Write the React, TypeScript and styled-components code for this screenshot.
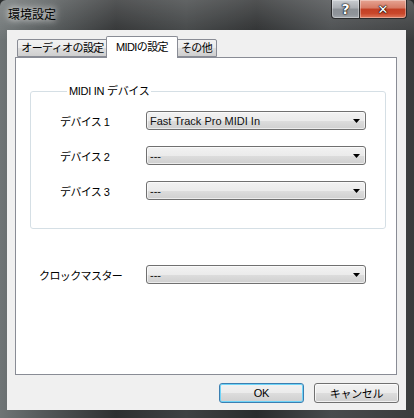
import React from 'react';
import styled, { createGlobalStyle } from 'styled-components';

const GlobalStyle = createGlobalStyle`
  html, body {
    margin: 0;
    padding: 0;
    background: #2b2d2e;
  }
  body {
    font-family: "Liberation Sans", "Noto Sans CJK JP", sans-serif;
    font-size: 11px;
    color: #000;
  }
`;

const Window = styled.div`
  width: 414px;
  height: 418px;
  box-sizing: border-box;
  display: flex;
  flex-direction: column;
  border-radius: 6px 6px 0 0;
  background:
    linear-gradient(180deg, rgba(255, 255, 255, 0.18) 0px, rgba(255, 255, 255, 0) 40px),
    linear-gradient(90deg, #6f7576 0%, #555a5b 10%, #2e3031 28%, #3f4243 45%, #2a2c2d 62%, #484b4d 80%, #3a3c3d 100%);
  overflow: hidden;
`;

const TitleBar = styled.div`
  height: 30px;
  display: flex;
  justify-content: space-between;
  align-items: flex-start;
`;

const Title = styled.div`
  padding: 7px 0 0 8px;
  font-family: "Noto Sans CJK JP", sans-serif;
  font-size: 12px;
  line-height: 14px;
  color: #000;
  text-shadow: 0 0 6px rgba(255, 255, 255, 0.9), 0 0 10px rgba(255, 255, 255, 0.7);
`;

const CaptionButtons = styled.div`
  display: flex;
  margin-right: 7px;
`;

const CaptionButton = styled.div<{ $close?: boolean }>`
  width: ${(p) => (p.$close ? 47 : 29)}px;
  height: 19px;
  box-sizing: border-box;
  display: flex;
  align-items: center;
  justify-content: center;
  border: 1px solid #2a2b2c;
  border-top: none;
  ${(p) => (p.$close ? 'border-left: none;' : '')}
  border-radius: ${(p) => (p.$close ? '0 0 4px 0' : '0 0 0 4px')};
  box-shadow: inset 0 0 0 1px rgba(255, 255, 255, 0.35);
  background: ${(p) =>
    p.$close
      ? 'linear-gradient(180deg, #e6a493 0%, #d67a64 45%, #c23f24 50%, #c9472b 75%, #e0795c 100%)'
      : 'linear-gradient(180deg, #c9cdd1 0%, #a9adb2 45%, #8c9196 50%, #8f949a 80%, #a3a8ad 100%)'};
  color: #fff;
  font-family: "DejaVu Sans", sans-serif;
  font-weight: bold;
  font-size: ${(p) => (p.$close ? 13 : 14)}px;
  text-shadow: 0 0 1px #000, 0 0 2px #000, 0 0 1px #000;
`;

const Client = styled.div`
  flex: 1;
  margin: 0 8px 8px 7px;
  box-sizing: border-box;
  background: #f0f0f0;
  padding: 6px 9px 0 8px;
  display: flex;
  flex-direction: column;
`;

const TabStrip = styled.div`
  display: flex;
  align-items: flex-end;
  height: 21px;
  padding-left: 2px;
`;

const Tab = styled.div<{ $active?: boolean; $w: number }>`
  width: ${(p) => p.$w}px;
  height: ${(p) => (p.$active ? 22 : 18)}px;
  box-sizing: border-box;
  margin: ${(p) => (p.$active ? '0 -2px -1px -2px' : '0')};
  position: ${(p) => (p.$active ? 'relative' : 'static')};
  z-index: ${(p) => (p.$active ? 1 : 0)};
  border: 1px solid #898c95;
  border-bottom: ${(p) => (p.$active ? 'none' : '1px solid #898c95')};
  border-radius: 2px 2px 0 0;
  background: ${(p) => (p.$active ? '#fff' : 'linear-gradient(180deg, #f2f2f2 0%, #ebebeb 50%, #dddddd 51%, #cfcfcf 100%)')};
  display: flex;
  align-items: center;
  justify-content: center;
  font-size: 11px;
  line-height: 13px;
  letter-spacing: -0.6px;
  padding-top: ${(p) => (p.$active ? 0 : 1)}px;
  white-space: nowrap;
`;

const TabPanel = styled.div`
  height: 318px;
  box-sizing: border-box;
  border: 1px solid #898c95;
  background: #fff;
  padding: 26px 10px 0 14px;
`;

const GroupBox = styled.fieldset`
  margin: 0;
  padding: 13px 0 28px 29px;
  border: 1px solid #d5dfe5;
  border-radius: 3px;
  display: flex;
  flex-direction: column;
  gap: 16px;
`;

const GroupTitle = styled.legend`
  margin-left: 7px;
  padding: 0 2px;
  font-size: 11px;
  line-height: 14px;
  letter-spacing: -0.3px;
`;

const Row = styled.div<{ $label: number }>`
  display: grid;
  grid-template-columns: ${(p) => p.$label}px 220px;
  align-items: center;
`;

const Label = styled.span`
  font-size: 11px;
  letter-spacing: -0.6px;
  white-space: nowrap;
`;

const ClockRow = styled(Row)`
  margin: 36px 0 0 9px;
`;

const Combo = styled.div`
  height: 19px;
  box-sizing: border-box;
  border: 1px solid #707070;
  border-radius: 3px;
  box-shadow: inset 0 0 0 1px rgba(255, 255, 255, 0.6);
  background: linear-gradient(180deg, #f2f2f2 0%, #ebebeb 50%, #dddddd 51%, #cfcfcf 100%);
  display: flex;
  align-items: center;
  padding: 0 5px 0 3px;
  white-space: nowrap;
`;

const ComboText = styled.span`
  flex: 1;
  font-size: 11px;
  color: #111;
`;

const ButtonRow = styled.div`
  display: flex;
  justify-content: flex-end;
  gap: 10px;
  padding-top: 8px;
  margin-right: -2px;
`;

const Button = styled.div<{ $default?: boolean }>`
  width: 85px;
  height: 20px;
  box-sizing: border-box;
  border: 1px solid ${(p) => (p.$default ? '#3c7fb1' : '#707070')};
  border-radius: 3px;
  box-shadow: inset 0 0 0 1px ${(p) => (p.$default ? '#6fd4f8' : 'rgba(255, 255, 255, 0.7)')};
  background: linear-gradient(180deg, #f2f2f2 0%, #ebebeb 50%, #dddddd 51%, #cfcfcf 100%);
  display: flex;
  align-items: center;
  justify-content: center;
  font-size: 11px;
  letter-spacing: -0.3px;
`;

const Arrow = () => (
  <svg width="7" height="4" viewBox="0 0 7 4">
    <path d="M0 0 H7 L3.5 4 Z" fill="#000" />
  </svg>
);

const Dropdown = ({ value }: { value: string }) => (
  <Combo>
    <ComboText>{value}</ComboText>
    <Arrow />
  </Combo>
);

const devices = [
  { label: 'デバイス 1', value: 'Fast Track Pro MIDI In' },
  { label: 'デバイス 2', value: '---' },
  { label: 'デバイス 3', value: '---' },
];

export default function App() {
  return (
    <>
      <GlobalStyle />
      <Window>
        <TitleBar>
          <Title>環境設定</Title>
          <CaptionButtons>
            <CaptionButton>?</CaptionButton>
            <CaptionButton $close>✕</CaptionButton>
          </CaptionButtons>
        </TitleBar>
        <Client>
          <TabStrip>
            <Tab $w={91}>オーディオの設定</Tab>
            <Tab $w={72} $active>MIDIの設定</Tab>
            <Tab $w={41}>その他</Tab>
          </TabStrip>
          <TabPanel>
            <GroupBox>
              <GroupTitle>MIDI IN デバイス</GroupTitle>
              {devices.map((d) => (
                <Row key={d.label} $label={86}>
                  <Label>{d.label}</Label>
                  <Dropdown value={d.value} />
                </Row>
              ))}
            </GroupBox>
            <ClockRow $label={107}>
              <Label>クロックマスター</Label>
              <Dropdown value="---" />
            </ClockRow>
          </TabPanel>
          <ButtonRow>
            <Button $default>OK</Button>
            <Button>キャンセル</Button>
          </ButtonRow>
        </Client>
      </Window>
    </>
  );
}
